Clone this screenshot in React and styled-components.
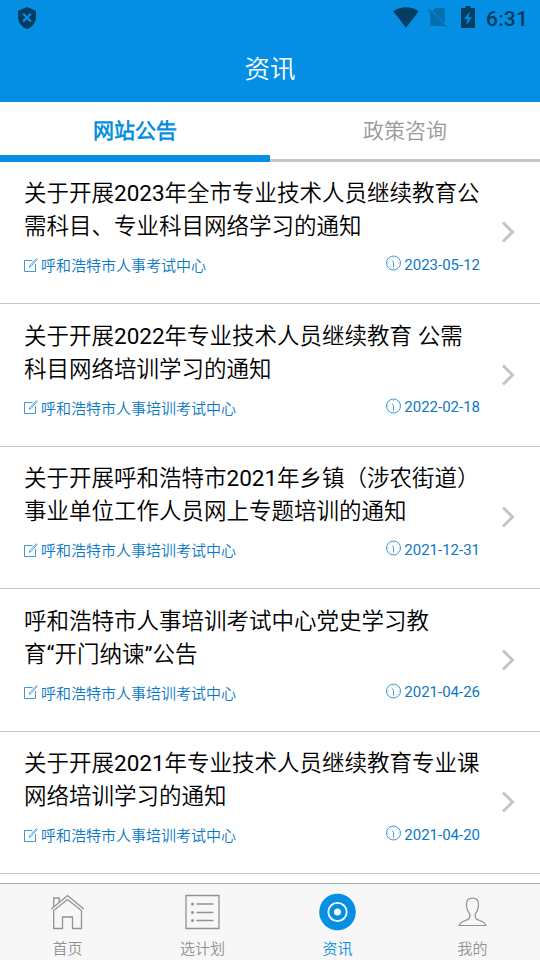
import React from 'react';
import styled, { createGlobalStyle } from 'styled-components';

const BLUE = '#058fe4';

const GlobalStyle = createGlobalStyle`
  * { box-sizing: border-box; }
  body { margin: 0; background: #fff; }
  svg { display: block; flex: none; }
`;

const Screen = styled.div`
  width: 540px;
  height: 960px;
  display: flex;
  flex-direction: column;
  overflow: hidden;
  background: #fff;
  color: #000;
  font-family: Roboto, 'Noto Sans CJK SC DemiLight', 'Noto Sans CJK SC', sans-serif;
`;

const StatusBar = styled.div`
  flex: none;
  height: 36px;
  padding: 0 13px 0 17px;
  display: flex;
  align-items: center;
  justify-content: space-between;
  background: ${BLUE};
  color: #033d61;
`;

const StatusIcons = styled.div`
  display: flex;
  align-items: center;
  padding-bottom: 2px;
`;

const Clock = styled.span`
  width: 41px;
  margin-left: 11px;
  padding-top: 4px;
  font-size: 21px;
  line-height: 24px;
  font-weight: 500;
  letter-spacing: 0.2px;
  white-space: nowrap;
`;

const Header = styled.header`
  flex: none;
  height: 66px;
  display: flex;
  align-items: center;
  justify-content: center;
  background: ${BLUE};
  color: #fff;
  font-size: 25.5px;
  line-height: 36px;
`;

const Tabs = styled.div`
  flex: none;
  height: 60px;
  display: flex;
`;

const Tab = styled.div`
  flex: 1;
  padding-top: 14px;
  text-align: center;
  font-size: 21px;
  line-height: 31px;
  font-weight: ${(p) => (p.$active ? 700 : 400)};
  color: ${(p) => (p.$active ? BLUE : '#999')};
  border-bottom: ${(p) => (p.$active ? `7px solid ${BLUE}` : '3px solid #c8c8c8')};
`;

const List = styled.main`
  flex: 1;
  min-height: 0;
  overflow: hidden;
`;

const Row = styled.article`
  height: 142.5px;
  padding: 15.5px 25px 0 24px;
  display: flex;
  justify-content: space-between;
  border-bottom: 1px solid #c8c8c8;

  &:first-child {
    margin-top: -0.5px;
  }
`;

const Content = styled.div`
  width: 456px;
`;

const Title = styled.h2`
  margin: 0;
  font-size: 22.5px;
  line-height: 33px;
  font-weight: 400;
  white-space: pre;
`;

const Meta = styled.div`
  margin-top: 11.5px;
  display: flex;
  justify-content: space-between;
  color: #0b78c6;
  font-size: 15px;
  line-height: 22px;
`;

const Author = styled.span`
  display: flex;
  align-items: center;
  gap: 3px;
  padding-top: 0.5px;

  svg {
    margin-bottom: 3px;
  }
`;

const DateText = styled.span`
  display: flex;
  align-items: center;
  gap: 3px;
  height: 20px;

  svg {
    margin-bottom: 3px;
  }
`;

const Arrow = styled.svg`
  margin-top: 44px;
`;

const BottomNav = styled.nav`
  flex: none;
  height: 77px;
  display: flex;
  background: #f7f7f7;
  border-top: 1px solid #aaa;
`;

const NavItem = styled.div`
  flex: 1;
  padding-top: 9px;
  display: flex;
  flex-direction: column;
  align-items: center;
  color: ${(p) => (p.$active ? BLUE : '#929292')};
  font-size: 15px;
  line-height: 22px;
`;

const NavLabel = styled.span`
  margin-top: 7px;
`;

const ShieldIcon = () => (
  <svg width="20" height="24" viewBox="0 0 20 24">
    <path d="M10 1 19 4.8V11c0 5.5-3.8 10.2-9 12C4.8 21.200 1 16.500 1 11V4.800Z" fill="currentColor" />
    <path d="m6.700 8.300 6.600 6.600m0-6.600-6.600 6.600" stroke={BLUE} strokeWidth="2.200" strokeLinecap="round" />
  </svg>
);

const WifiIcon = () => (
  <svg width="26" height="22" viewBox="0 0 26 22">
    <path d="M0.300 5.200C7.500-.2 18.500-.2 25.700 5.200L13 21.700Z" fill="currentColor" />
  </svg>
);

const NoSimIcon = () => (
  <svg width="20" height="20" viewBox="0 0 20 20">
    <g opacity=".4">
      <path d="M7 1H15.500Q17 1 17 2.500V16.500L4.300 3.800ZM2.200 4.700 16.500 19H3.700Q2.200 19 2.200 17.500Z" fill="currentColor" />
      <path d="M.5 2.200 18.700 20" stroke="currentColor" strokeWidth="1.500" />
    </g>
  </svg>
);

const BatteryIcon = () => (
  <svg width="14" height="22" viewBox="0 0 14 22">
    <path d="M4.500 0H9.500V2H14V22H0V2H4.500Z" fill="currentColor" />
    <path d="M8.800 5.500 3 13h3.200L5.200 19.200 11.200 11.300H7.700Z" fill={BLUE} opacity=".9" />
  </svg>
);

const Gap = styled.span`
  width: ${(p) => p.$w}px;
`;

const EditIcon = () => (
  <svg width="14" height="14" viewBox="0 0 14 14" fill="none" stroke="#3f97d4" strokeWidth="1">
    <path d="M8.500 2.500H.5V13.500H11.500V6" />
    <path d="M5.300 9.300 5.800 7.500 12.600.7l.6.6L7 8.500Z" strokeWidth=".9" />
  </svg>
);

const TimeIcon = () => (
  <svg width="16" height="16" viewBox="0 0 16 16" fill="none" stroke="#3f97d4">
    <circle cx="8.500" cy="8" r="7" strokeWidth="1" />
    <path d="M7.200 5.500 8.500 7.500v5" strokeWidth="1" />
    <path d="M8.500 2v1M8.500 13.500v1M2.500 8h1M13.500 8h1M4.500 4l.5.5M12 4.500l.5-.5M4.500 12l.5-.5M12 11.500l.5.5" strokeWidth=".6" />
  </svg>
);

const HomeIcon = () => (
  <svg width="37" height="38" viewBox="0 0 37 38" fill="none" stroke="currentColor" strokeWidth="1.300">
    <path d="M2.300 16 18.500 2.500 34.700 16" />
    <path d="M4.700 17.500 18.500 6.500 32.500 17.500V35.500H23.500V24H13.500V35.500H4.700Z" />
    <path d="M4.700 13.700V5H10.200V9.200" />
  </svg>
);

const PlanIcon = () => (
  <svg width="37" height="38" viewBox="0 0 37 38" fill="none" stroke="currentColor" strokeWidth="1.300">
    <path d="M2 2.500H35V35.500H2Z" />
    <path d="M12.500 11h17M12.500 19.500h17M12.500 27.500h17" />
    <g fill="currentColor" stroke="none">
      <circle cx="8.500" cy="11" r="1.500" />
      <circle cx="8.500" cy="19.500" r="1.500" />
      <circle cx="8.500" cy="27.500" r="1.500" />
    </g>
  </svg>
);

const NewsIcon = () => (
  <svg width="37" height="38" viewBox="0 0 37 38">
    <circle cx="18.500" cy="19" r="18.300" fill="currentColor" />
    <circle cx="18.500" cy="19" r="9.200" fill="none" stroke="#fff" strokeWidth="1.800" />
    <circle cx="18.500" cy="19" r="3.500" fill="#fff" />
  </svg>
);

const UserIcon = () => (
  <svg width="37" height="38" viewBox="0 0 37 38" fill="none" stroke="currentColor" strokeWidth="1.200">
    <path d="M18.500 5.200C14.500 5.200 12.500 7.600 12.500 11.500C12.500 15.500 13.500 18.200 15.600 20.700C16.200 23.200 15.700 25.200 14 26.400C10.800 28 6.500 28.200 5.100 32.500H31.900C30.500 28.200 26.200 28 23 26.400C21.300 25.200 20.800 23.200 21.400 20.700C23.500 18.200 24.500 15.500 24.500 11.500C24.500 7.600 22.500 5.200 18.500 5.200Z" />
  </svg>
);

const notices = [
  ['关于开展2023年全市专业技术人员继续教育公\n需科目、专业科目网络学习的通知', '呼和浩特市人事考试中心', '2023-05-12'],
  ['关于开展2022年专业技术人员继续教育 公需\n科目网络培训学习的通知', '呼和浩特市人事培训考试中心', '2022-02-18'],
  ['关于开展呼和浩特市2021年乡镇（涉农街道）\n事业单位工作人员网上专题培训的通知', '呼和浩特市人事培训考试中心', '2021-12-31'],
  ['呼和浩特市人事培训考试中心党史学习教\n育“开门纳谏”公告', '呼和浩特市人事培训考试中心', '2021-04-26'],
  ['关于开展2021年专业技术人员继续教育专业课\n网络培训学习的通知', '呼和浩特市人事培训考试中心', '2021-04-20'],
];

const navItems = [
  ['首页', HomeIcon],
  ['选计划', PlanIcon],
  ['资讯', NewsIcon],
  ['我的', UserIcon],
];

export default function App() {
  return (
    <Screen>
      <GlobalStyle />
      <StatusBar>
        <ShieldIcon />
        <StatusIcons>
          <WifiIcon />
          <Gap $w={9} />
          <NoSimIcon />
          <Gap $w={13} />
          <BatteryIcon />
          <Clock>6:31</Clock>
        </StatusIcons>
      </StatusBar>
      <Header>资讯</Header>
      <Tabs>
        <Tab $active>网站公告</Tab>
        <Tab>政策咨询</Tab>
      </Tabs>
      <List>
        {notices.map(([title, author, date]) => (
          <Row key={date}>
            <Content>
              <Title>{title}</Title>
              <Meta>
                <Author><EditIcon />{author}</Author>
                <DateText><TimeIcon />{date}</DateText>
              </Meta>
            </Content>
            <Arrow width="14" height="22" viewBox="0 0 14 22" fill="none" stroke="#c4c4c7" strokeWidth="3">
              <path d="M2 1.500 11.500 11 2 20.500" />
            </Arrow>
          </Row>
        ))}
      </List>
      <BottomNav>
        {navItems.map(([label, Icon]) => (
          <NavItem key={label} $active={label === '资讯'}>
            <Icon />
            <NavLabel>{label}</NavLabel>
          </NavItem>
        ))}
      </BottomNav>
    </Screen>
  );
}
